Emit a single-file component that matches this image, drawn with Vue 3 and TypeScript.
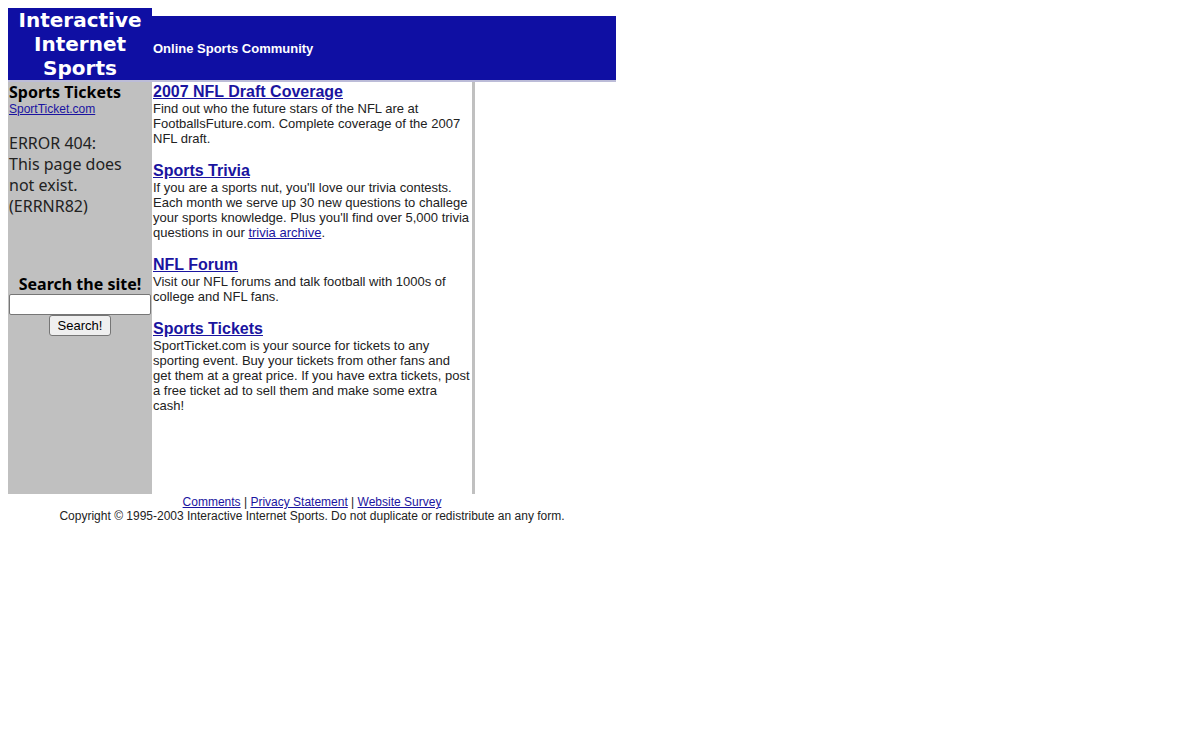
<script setup lang="ts">
import { ref } from 'vue'

interface Feature {
  title: string
  text: string
  link?: string
}

const query = ref('')

const features: Feature[] = [
  {
    title: '2007 NFL Draft Coverage',
    text: 'Find out who the future stars of the NFL are at FootballsFuture.com. Complete coverage of the 2007 NFL draft.',
  },
  {
    title: 'Sports Trivia',
    text: "If you are a sports nut, you'll love our trivia contests. Each month we serve up 30 new questions to challege your sports knowledge. Plus you'll find over 5,000 trivia questions in our ",
    link: 'trivia archive',
  },
  {
    title: 'NFL Forum',
    text: 'Visit our NFL forums and talk football with 1000s of college and NFL fans.',
  },
  {
    title: 'Sports Tickets',
    text: 'SportTicket.com is your source for tickets to any sporting event. Buy your tickets from other fans and get them at a great price. If you have extra tickets, post a free ticket ad to sell them and make some extra cash!',
  },
]

const footerLinks: string[] = ['Comments', 'Privacy Statement', 'Website Survey']
</script>

<template>
  <div class="page">
    <header class="header">
      <h1 class="logo">Interactive Internet Sports</h1>
      <div class="banner">Online Sports Community</div>
    </header>
    <div class="columns">
      <aside class="sidebar">
        <h2 class="side-title">Sports Tickets</h2>
        <a class="side-link" href="#">SportTicket.com</a>
        <p class="error">ERROR 404:<br />This page does not exist. (ERRNR82)</p>
        <form class="search" @submit.prevent>
          <label class="side-title" for="query">Search the site!</label>
          <input id="query" v-model="query" type="text" />
          <button type="submit">Search!</button>
        </form>
      </aside>
      <main class="content">
        <section v-for="item in features" :key="item.title" class="feature">
          <h2><a href="#">{{ item.title }}</a></h2>
          <p>{{ item.text }}<template v-if="item.link"><a href="#">{{ item.link }}</a>.</template></p>
        </section>
      </main>
      <div class="extra"></div>
    </div>
    <footer class="footer">
      <nav>
        <template v-for="(name, i) in footerLinks" :key="name"><template v-if="i > 0"> | </template><a href="#">{{ name }}</a></template>
      </nav>
      <p>Copyright © 1995-2003 Interactive Internet Sports. Do not duplicate or redistribute an any form.</p>
    </footer>
  </div>
</template>

<style>
body {
  margin: 0;
  background: #fff;
}
</style>

<style scoped>
.page {
  max-width: 608px;
  margin: 8px;
  font-family: "Liberation Sans", Arial, sans-serif;
  font-size: 13px;
  line-height: 15px;
  color: #222;
}

h1,
h2,
p {
  margin: 0;
}

a {
  color: #1a14a0;
}

.header {
  display: flex;
  align-items: flex-end;
}

.logo {
  flex: none;
  box-sizing: border-box;
  width: 144px;
  padding: 0 8px;
  background: #0f0fa3;
  color: #fff;
  font-family: Verdana, "DejaVu Sans", sans-serif;
  font-size: 20px;
  line-height: 24px;
  text-align: center;
}

.banner {
  flex: 1;
  display: flex;
  align-items: center;
  height: 64px;
  padding-left: 1px;
  background: #0f0fa3;
  color: #fff;
  font-weight: bold;
}

.columns {
  display: grid;
  grid-template-columns: 144px 320fr 144fr;
  min-height: 412px;
  border-top: 2px solid #bcbcd8;
}

.sidebar {
  padding: 0 1px;
  background: #c0c0c0;
}

.side-title {
  display: block;
  color: #000;
  font-family: "Segoe UI", "Noto Sans", sans-serif;
  font-size: 16px;
  font-weight: bold;
  line-height: 20px;
}

.side-link {
  display: block;
  font-size: 12px;
  line-height: 14px;
}

.error {
  margin-top: 17px;
  font-family: "Segoe UI", "Noto Sans", sans-serif;
  font-size: 16px;
  line-height: 21px;
}

.search {
  display: flex;
  flex-direction: column;
  align-items: center;
  margin-top: 57px;
}

.search input {
  box-sizing: border-box;
  width: 100%;
  height: 21px;
  padding: 1px 2px;
  border: 1px solid #767676;
  border-radius: 2px;
  background: #fff;
  font: 13px "Liberation Sans", Arial, sans-serif;
}

.search button {
  height: 21px;
  padding: 0 8px;
  border: 1px solid #767676;
  border-radius: 3px;
  background: #efefef;
  color: #000;
  font: 13px "Liberation Sans", Arial, sans-serif;
}

.content {
  padding: 0 1px;
}

.feature {
  margin-bottom: 15px;
}

.feature h2 {
  font-size: 16px;
  line-height: 19px;
}

.extra {
  border-left: 3px solid #c0c0c0;
}

.footer {
  padding-top: 1px;
  font-size: 12px;
  line-height: 14px;
  text-align: center;
}
</style>
